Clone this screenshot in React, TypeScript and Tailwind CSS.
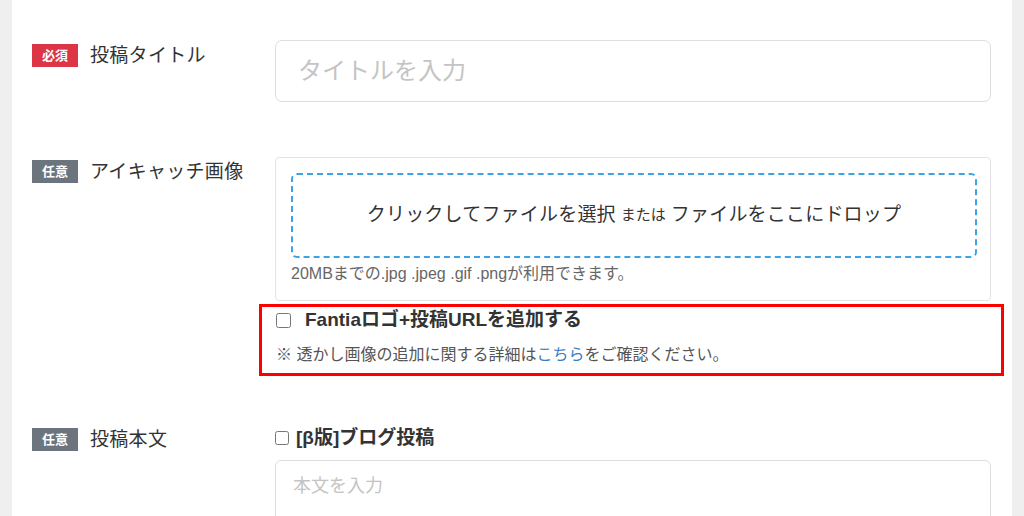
import React from "react";

const font = { fontFamily: '"Liberation Sans", "Noto Sans CJK JP", sans-serif' };

function Badge({ required }: { required?: boolean }) {
  return (
    <span
      className={`inline-flex h-[23px] w-[46px] shrink-0 items-center justify-center text-[13px] font-bold leading-none text-white ${
        required ? "bg-[#dc3545]" : "bg-[#6c757d]"
      }`}
    >
      {required ? "必須" : "任意"}
    </span>
  );
}

function FieldLabel({ required, children }: { required?: boolean; children: React.ReactNode }) {
  return (
    <div className="flex items-center gap-[12px]">
      <Badge required={required} />
      <span className="text-[19px] leading-none tracking-[0.3px] text-[#333]">{children}</span>
    </div>
  );
}

export default function App() {
  return (
    <div className="flex h-[516px] overflow-hidden bg-[#efefef] px-[12px]" style={font}>
      <div className="flex-1 bg-white pl-[20px] pt-[40px]">
        {/* 投稿タイトル */}
        <div className="grid grid-cols-[243px_716px]">
          <div className="pt-[4px]">
            <FieldLabel required>投稿タイトル</FieldLabel>
          </div>
          <div className="flex h-[62px] items-center rounded-[7px] border border-[#dedede] pl-[22px] text-[24px] text-[#c4c4c4]">
            タイトルを入力
          </div>
        </div>

        {/* アイキャッチ画像 */}
        <div className="mt-[55px] grid grid-cols-[243px_716px]">
          <div className="pt-[3px]">
            <FieldLabel>アイキャッチ画像</FieldLabel>
          </div>
          <div>
            <div className="h-[144px] rounded-[4px] border border-[#e3e3e3] pl-[15px] pr-[13px] pt-[15px]">
              <div className="flex h-[85px] items-center justify-center gap-[5px] rounded-[6px] border-2 border-dashed border-[#3ea2e6] text-[#333]">
                <span className="text-[19px] tracking-[0.2px]">クリックしてファイルを選択</span>
                <span className="text-[15px]">または</span>
                <span className="text-[19px] tracking-[0.2px]">ファイルをここにドロップ</span>
              </div>
              <p className="mt-[6px] text-[16px] leading-[20px] text-[#666]">
                20MBまでの.jpg .jpeg .gif .pngが利用できます。
              </p>
            </div>
            <div className="ml-[-16px] mr-[-13px] mt-[3px] h-[72px] border-[3px] border-[#ff0000] pl-[14px] pt-[1px]">
              <label className="flex h-[24px] items-center gap-[14px]">
                <input type="checkbox" className="m-0 h-[15px] w-[15px]" />
                <span className="text-[19px] font-bold text-[#333]">Fantiaロゴ+投稿URLを追加する</span>
              </label>
              <p className="mt-[13px] text-[16px] leading-[20px] text-[#555]">
                ※ 透かし画像の追加に関する詳細は<span className="text-[#3b7ec2]">こちら</span>をご確認ください。
              </p>
            </div>
          </div>
        </div>

        {/* 投稿本文 */}
        <div className="mt-[50px] grid grid-cols-[243px_716px]">
          <div className="pt-[2px]">
            <FieldLabel>投稿本文</FieldLabel>
          </div>
          <div>
            <label className="flex h-[24px] items-center gap-[7px]">
              <input type="checkbox" className="m-0 h-[14px] w-[14px]" />
              <span className="text-[19px] font-bold text-[#333]">[β版]ブログ投稿</span>
            </label>
            <div className="mt-[10px] h-[120px] rounded-[6px] border border-[#dedede] pl-[17px] pt-[12px] text-[18px] text-[#c4c4c4]">
              本文を入力
            </div>
          </div>
        </div>
      </div>
    </div>
  );
}
